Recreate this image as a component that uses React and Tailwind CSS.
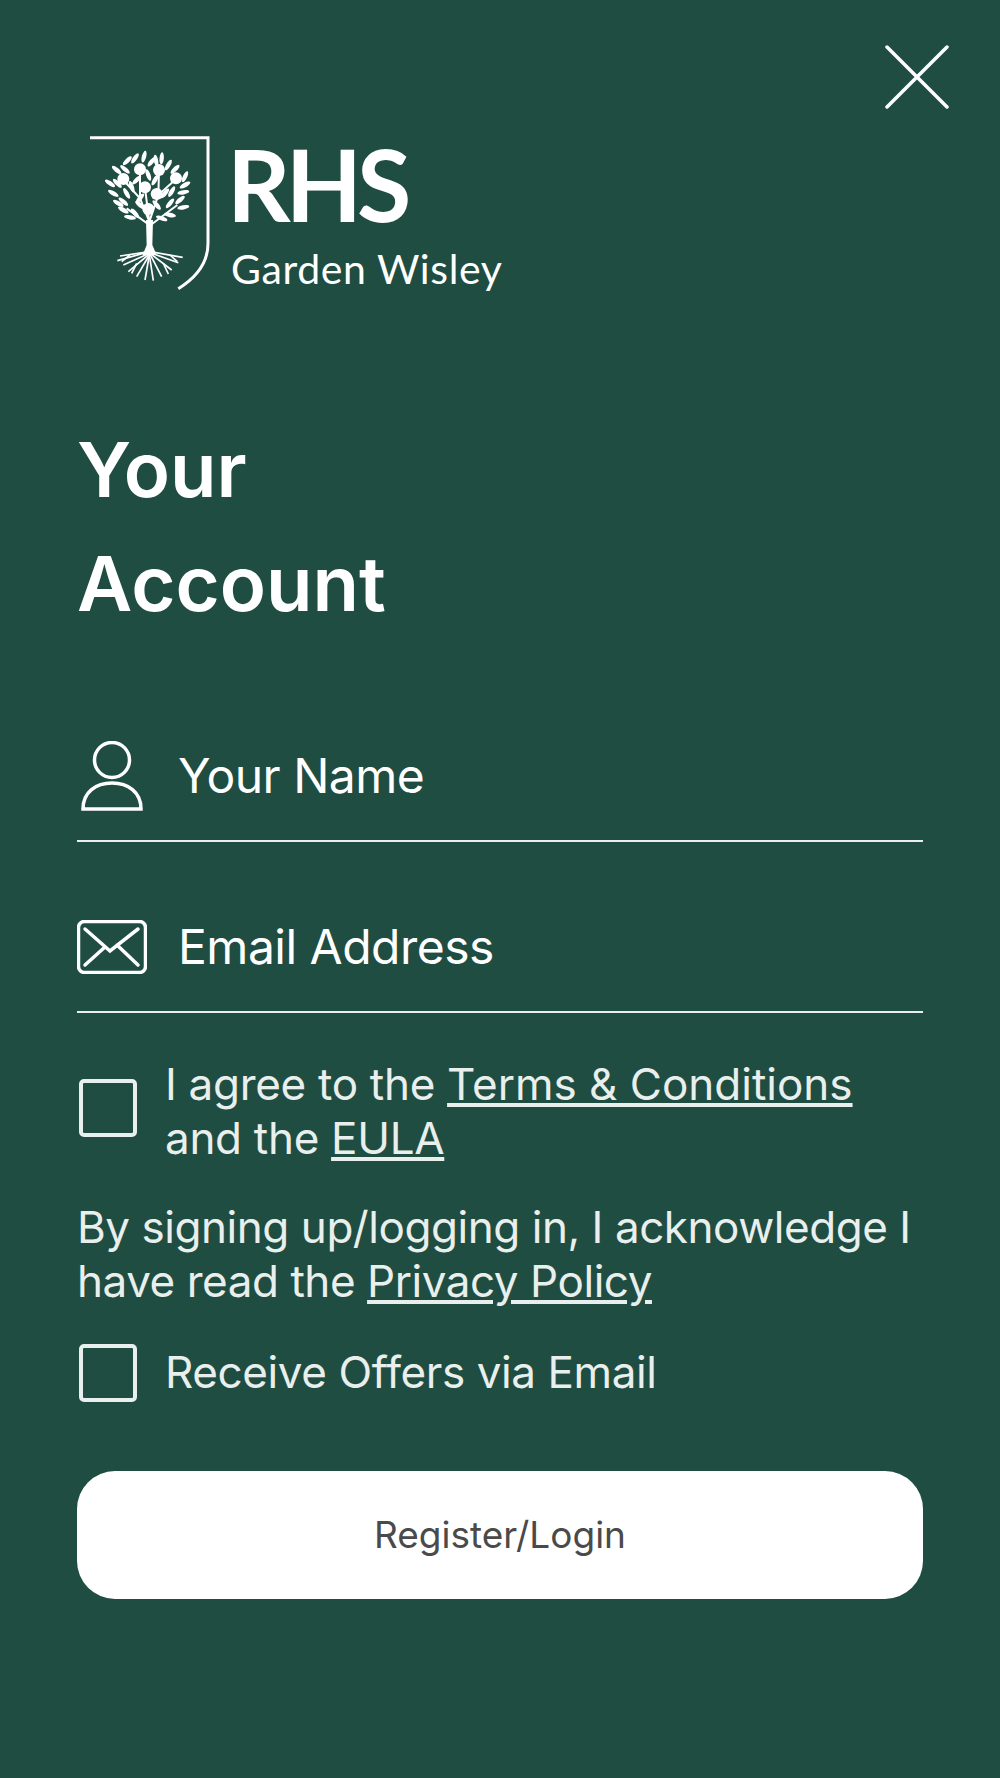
const leaves = [
  [162, 80, -75], [135, 85, -55], [112, 92, -45], [185, 95, -50], [215, 85, -85], [235, 105, -60],
  [198, 92, 80], [255, 118, -45], [285, 140, -65], [80, 120, 40], [105, 118, 40], [60, 160, 35],
  [82, 160, 45], [110, 190, 60], [125, 170, 70], [285, 165, -30], [280, 187, -10], [245, 185, -60],
  [225, 190, -50], [70, 190, 30], [85, 220, 30], [100, 240, 30], [120, 262, 10], [135, 250, 50],
  [150, 205, -50], [140, 150, -45], [175, 135, 70], [195, 150, -60], [240, 220, -50], [270, 210, -40],
  [280, 232, -10], [240, 255, 10], [215, 265, 20], [200, 225, 50], [150, 225, 40], [100, 215, 40],
];

const apples = [
  [150, 118], [207, 120], [100, 147], [258, 145], [165, 172], [200, 192], [175, 237],
];

const branches = [
  "M178 275 L150 205 L100 150",
  "M178 275 L165 175",
  "M178 275 L205 195 L258 147",
  "M150 205 L150 120",
  "M205 195 L207 122",
  "M178 285 L110 235",
  "M182 285 L262 225",
];

const roots = [
  "M178 365 L90 378",
  "M178 365 L82 392",
  "M178 370 L100 405",
  "M178 372 L115 425",
  "M178 375 L140 440",
  "M178 375 L165 450",
  "M178 375 L190 452",
  "M180 372 L215 440",
  "M180 370 L245 420",
  "M180 368 L265 398",
  "M180 365 L278 382",
  "M120 375 L95 395",
  "M240 375 L262 395",
  "M140 400 L125 430",
  "M220 400 L235 432",
];

const LogoMark = () => (
  <svg viewBox="0 0 390 495" className="h-[165px] w-[130px] shrink-0">
    <path
      d="M0 23 H354 V340 C354 400 315 445 265 476"
      fill="none"
      stroke="white"
      strokeWidth="9"
    />
    {branches.map((d) => (
      <path key={d} d={d} fill="none" stroke="white" strokeWidth="6" />
    ))}
    {leaves.map(([x, y, a]) => (
      <ellipse
        key={`${x}-${y}`}
        cx={x}
        cy={y}
        rx="18"
        ry="6.5"
        fill="white"
        transform={`rotate(${a} ${x} ${y})`}
      />
    ))}
    {apples.map(([x, y]) => (
      <circle key={`${x}-${y}`} cx={x} cy={y} r="18" fill="white" />
    ))}
    <path d="M168 270 H189 L187 345 L200 375 H158 L170 345 Z" fill="white" />
    {roots.map((d) => (
      <path key={d} d={d} fill="none" stroke="white" strokeWidth="5" />
    ))}
  </svg>
);

const CloseIcon = () => (
  <svg viewBox="0 0 64 64" className="h-16 w-16">
    <path
      d="M2 2 L62 62 M62 2 L2 62"
      fill="none"
      stroke="white"
      strokeWidth="3.5"
      strokeLinecap="round"
    />
  </svg>
);

const UserIcon = () => (
  <svg viewBox="0 0 62 70" fill="none" stroke="white" strokeWidth="3.5" className="ml-[4px] h-[70px] w-[62px]">
    <circle cx="31" cy="19" r="17.5" />
    <path d="M2 68 C2 51 15 42 31 42 C47 42 60 51 60 68 Z" />
  </svg>
);

const MailIcon = () => (
  <svg viewBox="0 0 70 54" fill="none" stroke="white" strokeWidth="3.5" strokeLinecap="round" className="h-[54px] w-[70px]">
    <rect x="1.5" y="1.5" width="67" height="51" rx="6" />
    <path d="M8 9 L33 31 L61 9 M8 45 L28 27 M61 45 L40 25" />
  </svg>
);

const Field = ({ icon, label, className }) => (
  <div className={`flex h-[102px] items-center border-b-2 border-[#e9efec] pb-[29px] ${className}`}>
    <div className="flex w-[101px] justify-start">{icon}</div>
    <span className="text-[48px] leading-[58px] tracking-[-0.5px] text-white">{label}</span>
  </div>
);

const Checkbox = () => (
  <div className="h-[58px] w-[58px] shrink-0 rounded-[5px] border-4 border-[#e9efec]" />
);

const App = () => {
  return (
    <div
      className="flex h-[1778px] w-[1000px] flex-col bg-[#1f4d42] px-[77px]"
      style={{ fontFamily: "Inter, sans-serif" }}
    >
      <div className="flex justify-end pt-[45px] -mr-[26px]">
        <CloseIcon />
      </div>

      <div className="ml-[13px] mt-[21px] flex">
        <LogoMark />
        <div className="ml-[12px] flex flex-col">
          <span
            className="-ml-[5px] mt-[6px] text-[99px] font-bold leading-[96px] tracking-[-5px] text-white"
            style={{ fontFamily: "Lato, sans-serif" }}
          >
            RHS
          </span>
          <span
            className="-ml-[1px] mt-[14px] text-[41px] leading-[46px] tracking-[0.6px] text-white"
            style={{ fontFamily: "Lato, sans-serif" }}
          >
            Garden Wisley
          </span>
        </div>
      </div>

      <h1 className="mt-[117px] text-[76px] font-semibold leading-[114px] text-white">
        Your
        <br />
        Account
      </h1>

      <Field icon={<UserIcon />} label="Your Name" className="mt-[100px]" />
      <Field icon={<MailIcon />} label="Email Address" className="mt-[69px]" />

      <div className="mt-[44px] flex items-center gap-[28px]">
        <div className="mb-[7px] ml-[2px]">
          <Checkbox />
        </div>
        <p className="text-[44px] leading-[54px] tracking-[-0.3px] text-[#e9efec]">
          I agree to the <span className="tracking-normal underline">Terms &amp; Conditions</span>
          <br />
          and the <span className="underline">EULA</span>
        </p>
      </div>

      <p className="mt-[35px] whitespace-nowrap text-[44px] leading-[54px] tracking-[-0.45px] text-[#e9efec]">
        By signing up/logging in, I acknowledge I
        <br />
        have read the <span className="underline">Privacy Policy</span>
      </p>

      <div className="mt-[34px] flex items-center gap-[28px]">
        <div className="ml-[2px] mt-[2px]">
          <Checkbox />
        </div>
        <span className="text-[44px] leading-[54px] tracking-[-0.4px] text-[#e9efec]">Receive Offers via Email</span>
      </div>

      <button
        type="button"
        className="mt-[69px] flex h-[128px] w-full items-center justify-center rounded-[38px] bg-white text-[37px] text-[#4a4a4a]"
      >
        Register/Login
      </button>
    </div>
  );
};

export default App;
